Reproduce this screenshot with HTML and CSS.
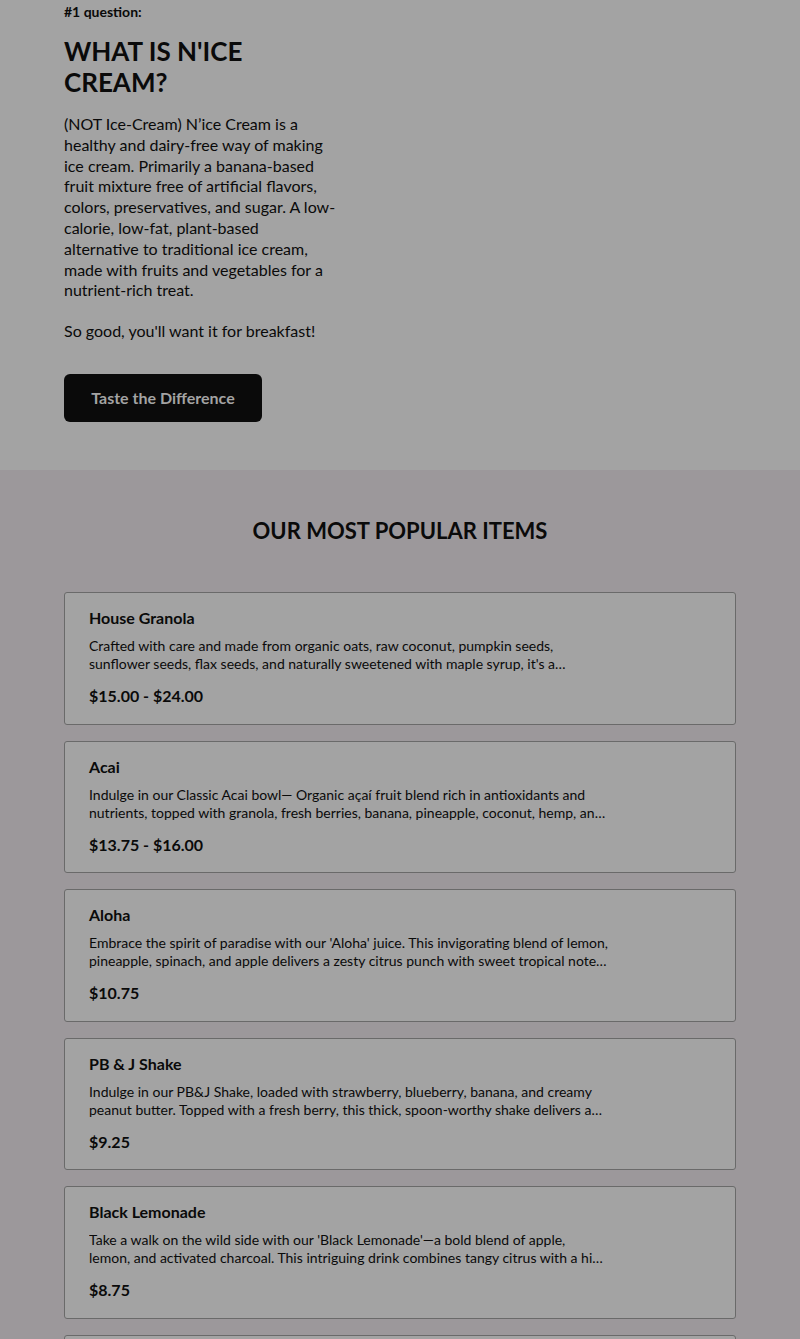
FILE: index.html
```html
<!DOCTYPE html>
<html lang="en">
<head>
<meta charset="utf-8">
<title>N'ice Cream</title>
<link rel="stylesheet" href="styles.css">
</head>
<body>
<section class="intro">
  <div class="intro-col">
    <p class="eyebrow">#1 question:</p>
    <h1 class="intro-title">WHAT IS N'ICE CREAM?</h1>
    <p class="intro-text">(NOT Ice-Cream) N’ice Cream is a healthy and dairy-free way of making ice cream. Primarily a banana-based fruit mixture free of artificial flavors, colors, preservatives, and sugar. A low-calorie, low-fat, plant-based alternative to traditional ice cream, made with fruits and vegetables for a nutrient-rich treat.</p>
    <p class="intro-text">So good, you'll want it for breakfast!</p>
    <a class="btn" href="#">Taste the Difference</a>
  </div>
</section>
<section class="popular">
  <h2 class="popular-title">OUR MOST POPULAR ITEMS</h2>
  <div class="items">
    <div class="item">
      <div class="item-body">
        <h3 class="item-name">House Granola</h3>
        <p class="item-desc">Crafted with care and made from organic oats, raw coconut, pumpkin seeds, sunflower seeds, flax seeds, and naturally sweetened with maple syrup, it's a delicious and nutritious start to your day.</p>
        <p class="item-price">$15.00 - $24.00</p>
      </div>
    </div>
    <div class="item">
      <div class="item-body">
        <h3 class="item-name">Acai</h3>
        <p class="item-desc">Indulge in our Classic Acai bowl— Organic açaí fruit blend rich in antioxidants and nutrients, topped with granola, fresh berries, banana, pineapple, coconut, hemp, and honey.</p>
        <p class="item-price">$13.75 - $16.00</p>
      </div>
    </div>
    <div class="item">
      <div class="item-body">
        <h3 class="item-name">Aloha</h3>
        <p class="item-desc">Embrace the spirit of paradise with our 'Aloha' juice. This invigorating blend of lemon, pineapple, spinach, and apple delivers a zesty citrus punch with sweet tropical notes and a refreshing finish.</p>
        <p class="item-price">$10.75</p>
      </div>
    </div>
    <div class="item">
      <div class="item-body">
        <h3 class="item-name">PB &amp; J Shake</h3>
        <p class="item-desc">Indulge in our PB&amp;J Shake, loaded with strawberry, blueberry, banana, and creamy peanut butter. Topped with a fresh berry, this thick, spoon-worthy shake delivers a nostalgic treat.</p>
        <p class="item-price">$9.25</p>
      </div>
    </div>
    <div class="item">
      <div class="item-body">
        <h3 class="item-name">Black Lemonade</h3>
        <p class="item-desc">Take a walk on the wild side with our 'Black Lemonade'—a bold blend of apple, lemon, and activated charcoal. This intriguing drink combines tangy citrus with a hint of sweetness.</p>
        <p class="item-price">$8.75</p>
      </div>
    </div>
    <div class="item">
      <div class="item-body">
        <h3 class="item-name">Green Machine</h3>
        <p class="item-desc">A refreshing blend of kale, spinach, cucumber, celery, apple, and lemon.</p>
        <p class="item-price">$10.75</p>
      </div>
    </div>
  </div>
</section>
</body>
</html>
```
FILE: styles.css
```css
* { box-sizing: border-box; }
html, body { margin: 0; padding: 0; }
body {
  font-family: Lato, "Liberation Sans", sans-serif;
  color: #0a0a0a;
  background: #9c989b;
}
.intro {
  background: #a3a3a3;
  padding: 3px 64px 48px;
}
.intro-col { width: 272px; }
.eyebrow {
  margin: 0;
  font-size: 14px;
  line-height: 18px;
  font-weight: 700;
}
.intro-title {
  margin: 15px 0 0;
  font-size: 26px;
  line-height: 31px;
  font-weight: 700;
}
.intro-text {
  margin: 16px 0 0;
  font-size: 16px;
  line-height: 20.8px;
}
.intro-text + .intro-text { margin-top: 20px; }
.btn {
  display: inline-flex;
  align-items: center;
  justify-content: center;
  margin-top: 32px;
  height: 48px;
  width: 198px;
  background: #0a0a0a;
  color: #a3a3a3;
  border-radius: 6px;
  font-size: 16px;
  font-weight: 700;
  text-decoration: none;
}
.popular {
  padding: 45px 64px 0;
}
.popular-title {
  margin: 0;
  text-align: center;
  font-size: 22px;
  line-height: 32px;
  font-weight: 700;
}
.items {
  margin-top: 45px;
  display: flex;
  flex-direction: column;
  gap: 16px;
}
.item {
  background: #a3a3a3;
  border: 1px solid #6a6a6a;
  border-radius: 3px;
  padding: 13px 24px 14px;
  min-height: 132.6px;
}
.item-body { width: 520px; }
.item-name {
  margin: 0;
  font-size: 16px;
  line-height: 24px;
  font-weight: 700;
}
.item-desc {
  margin: 7px 0 0;
  font-size: 14px;
  line-height: 18px;
  height: 36px;
  display: -webkit-box;
  -webkit-line-clamp: 2;
  -webkit-box-orient: vertical;
  overflow: hidden;
}
.item-price {
  margin: 11px 0 0;
  font-size: 16px;
  line-height: 24px;
  font-weight: 700;
}
```
